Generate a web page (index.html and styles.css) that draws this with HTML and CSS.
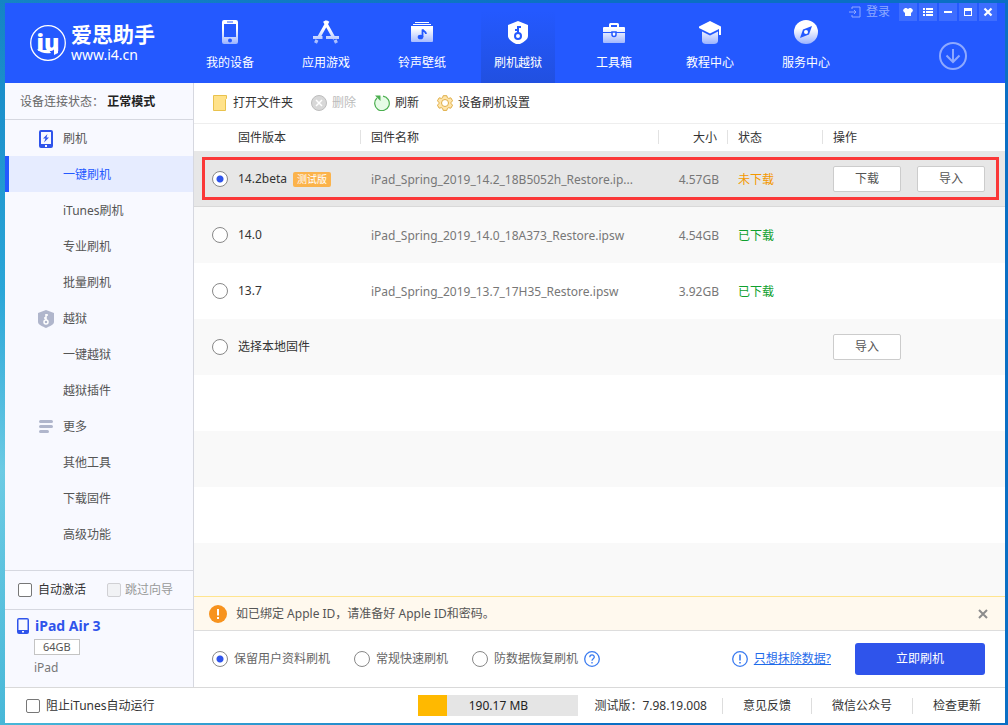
FILE: index.html
```html
<!DOCTYPE html>
<html lang="zh-CN">
<head>
<meta charset="utf-8">
<title>爱思助手</title>
<link rel="stylesheet" href="styles.css">
</head>
<body>
<svg class="defs" width="0" height="0" aria-hidden="true">
  <defs>
    <linearGradient id="fade" x1="0" y1="0" x2="0" y2="24" gradientUnits="userSpaceOnUse">
      <stop offset="0.35" stop-color="#fff"/><stop offset="1" stop-color="#9cb3ff"/>
    </linearGradient>
  </defs>
</svg>
<div class="window">
  <header class="topbar">
    <div class="brand">
      <svg class="brand-mark" viewBox="0 0 36 36" aria-hidden="true">
        <circle cx="18" cy="18" r="17.300" fill="none" stroke="#fff" stroke-width="1.300"/>
        <text x="18" y="26" text-anchor="middle" class="brand-letters">iu</text>
        <path fill="#fff" d="M7 24c3 4 9 5 14 4l-2-3h-8zM24 22h4v6l-4 2z"/>
      </svg>
      <div class="brand-text">
        <span class="brand-name">爱思助手</span>
        <span class="brand-url">www.i4.cn</span>
      </div>
    </div>
    <nav class="nav">
      <a class="nav-item" href="#">
        <svg viewBox="0 0 24 24"><path fill="url(#fade)" fill-rule="evenodd" d="M6 0h12a2 2 0 0 1 2 2v20a2 2 0 0 1-2 2H6a2 2 0 0 1-2-2V2a2 2 0 0 1 2-2zm0 4v13h12V4zM9 1.500v1h6v-1zM12 18.500a2 2 0 1 0 0 4a2 2 0 0 0 0-4z"/></svg>
        <span>我的设备</span></a>
      <a class="nav-item" href="#">
        <svg class="wide" viewBox="-1 0 26 24"><g stroke="url(#fade)" stroke-width="3.200" fill="none"><path d="M10.500 1l10 18M14 1L5 17M-1 17.500h9.500M12 17.500h13M3 20l-1.500 3M21 20l1.500 3"/></g></svg>
        <span>应用游戏</span></a>
      <a class="nav-item" href="#">
        <svg viewBox="0 0 24 24"><path fill="#fff" d="M5 2h14v1H5zM3 4h18v1H3z"/><path fill="url(#fade)" d="M1 6h22v15a1 1 0 0 1-1 1H2a1 1 0 0 1-1-1z"/><ellipse cx="10.500" cy="17" rx="2.800" ry="2.300" fill="#2459ff"/><path d="M12.500 17V9.500c1 2 3.500 2 3.500 4.500" fill="none" stroke="#2459ff" stroke-width="1.800"/></svg>
        <span>铃声壁纸</span></a>
      <a class="nav-item active" href="#">
        <svg viewBox="0 0 24 24"><path fill="#fff" d="M12 1l10 4v11c0 4-6 7-10 9C8 23 2 20 2 16V5z"/><circle cx="12" cy="16" r="3" fill="none" stroke="#2459ff" stroke-width="2"/><path d="M12 14V6M12 7h3M12 10h-3" fill="none" stroke="#2459ff" stroke-width="2"/></svg>
        <span>刷机越狱</span></a>
      <a class="nav-item" href="#">
        <svg viewBox="0 0 24 24"><path fill="none" stroke="#fff" stroke-width="2" d="M8 7V4.500a.5.5 0 0 1 .5-.5h7a.5.5 0 0 1 .5.5V7"/><path fill="url(#fade)" d="M2 7h20a1 1 0 0 1 1 1v4H1V8a1 1 0 0 1 1-1zM1 13h22v9a1 1 0 0 1-1 1H2a1 1 0 0 1-1-1z"/><path fill="#fff" stroke="#2459ff" stroke-width="1.500" d="M10 12h4v2.500a2 2 0 0 1-4 0z"/></svg>
        <span>工具箱</span></a>
      <a class="nav-item" href="#">
        <svg viewBox="0 0 24 24"><path fill="#fff" d="M12 1l11 5.500v8.500h-2V9l-9 4.500L1 8V6.500z"/><path fill="url(#fade)" d="M4 11.500l8 4 8-4V21c0 2-2 3-4 3H8c-2 0-4-1-4-3z"/></svg>
        <span>教程中心</span></a>
      <a class="nav-item" href="#">
        <svg viewBox="0 0 24 24"><circle cx="12" cy="12" r="12" fill="url(#fade)"/><path fill="#2459ff" d="M18 6l-3 8.500L6 18l3-8.500z"/><circle cx="12" cy="12" r="2" fill="#fff"/></svg>
        <span>服务中心</span></a>
    </nav>
    <div class="top-tools">
      <div class="window-controls">
        <button class="login" type="button">
          <svg viewBox="0 0 12 12"><path d="M3 3V1h8v10H3V9M0 6h7M5 4l2 2-2 2" fill="none" stroke="currentColor"/></svg>登录</button>
        <button class="ctl" type="button" aria-label="换肤"><svg viewBox="0 0 18 18"><path fill="#fff" d="M6 5h1.500l1.500 1 1.500-1H12l2 2-1 2.500h-1V13H6V9.500H5L4 7z"/></svg></button>
        <button class="ctl" type="button" aria-label="菜单"><svg viewBox="0 0 18 18"><path fill="#fff" d="M4 5h2v2H4zM7 5h7v2H7zM4 8h2v2H4zM7 8h7v2H7zM4 11h2v2H4zM7 11h7v2H7z"/></svg></button>
        <button class="ctl" type="button" aria-label="最小化"><svg viewBox="0 0 18 18"><path fill="#fff" d="M5 8h8v2H5z"/></svg></button>
        <button class="ctl" type="button" aria-label="最大化"><svg viewBox="0 0 18 18"><path fill="#fff" fill-rule="evenodd" d="M5 5h8v8H5zM6 8v4h6V8z"/></svg></button>
        <button class="ctl" type="button" aria-label="关闭"><svg viewBox="0 0 18 18"><path stroke="#fff" stroke-width="2.200" d="M5.500 5.500l7 7M12.500 5.500l-7 7"/></svg></button>
      </div>
      <button class="downloads" type="button" aria-label="下载管理"><svg viewBox="0 0 28 28"><g fill="none" stroke="#8ea9ff" stroke-width="2"><circle cx="14" cy="14" r="13"/><path d="M14 7v12M7.500 13.500L14 20l6.500-6.500"/></g></svg></button>
    </div>
  </header>

  <div class="body">
    <aside class="sidebar">
      <p class="status">设备连接状态： <strong>正常模式</strong></p>
      <nav class="menu">
        <a class="menu-item" href="#"><svg viewBox="0 0 16 18"><path fill="#2f54eb" fill-rule="evenodd" d="M3 0h10a2 2 0 0 1 2 2v14a2 2 0 0 1-2 2H3a2 2 0 0 1-2-2V2a2 2 0 0 1 2-2zM3 2v12h10V2zM7 15v2h2v-2z"/><path fill="#2f54eb" d="M9.500 4L5 8.500h2.500L6 12.500 11 7.500H8.500z"/></svg>刷机</a>
        <a class="menu-item active" href="#">一键刷机</a>
        <a class="menu-item" href="#">iTunes刷机</a>
        <a class="menu-item" href="#">专业刷机</a>
        <a class="menu-item" href="#">批量刷机</a>
        <a class="menu-item" href="#"><svg viewBox="0 0 16 18"><path fill="#b0b6cc" d="M8 0l8 3v9c0 3-5 4.500-8 6-3-1.500-8-3-8-6V3z"/><circle cx="8" cy="12" r="2" fill="none" stroke="#fff" stroke-width="1.500"/><path d="M8 10V4M8 5h2M8 8H6" fill="none" stroke="#fff" stroke-width="1.500"/></svg>越狱</a>
        <a class="menu-item" href="#">一键越狱</a>
        <a class="menu-item" href="#">越狱插件</a>
        <a class="menu-item" href="#"><svg viewBox="0 0 16 18"><path stroke="#b0b6cc" stroke-width="3" stroke-linecap="round" d="M2.500 3.500h11M2.500 8.500h11M2.500 13.500h7"/></svg>更多</a>
        <a class="menu-item" href="#">其他工具</a>
        <a class="menu-item" href="#">下载固件</a>
        <a class="menu-item" href="#">高级功能</a>
      </nav>
      <div class="options">
        <label class="check"><input type="checkbox">自动激活</label>
        <label class="check disabled"><input type="checkbox" disabled>跳过向导</label>
      </div>
      <div class="device">
        <h2 class="device-name"><svg viewBox="0 0 12 16"><path fill="#2f54eb" fill-rule="evenodd" d="M2 0h8a2 2 0 0 1 2 2v12a2 2 0 0 1-2 2H2a2 2 0 0 1-2-2V2a2 2 0 0 1 2-2zM1.500 1.500V12h9V1.500zM5 13v1.500h2V13z"/></svg>iPad Air 3</h2>
        <span class="capacity">64GB</span>
        <span class="device-type">iPad</span>
      </div>
    </aside>

    <main class="main">
      <div class="toolbar">
        <button type="button" class="tool"><svg viewBox="0 0 16 16"><path fill="#ffe28a" stroke="#e9c24d" d="M1.500.5h13v3l-1 1v11h-12z"/></svg>打开文件夹</button>
        <button type="button" class="tool" disabled><svg viewBox="0 0 16 16"><circle cx="8" cy="8" r="7.500" fill="#d8d8d8" stroke="#bdbdbd"/><path stroke="#fff" stroke-width="1.500" d="M5 5l6 6M11 5l-6 6"/></svg>删除</button>
        <button type="button" class="tool"><svg viewBox="0 0 16 16"><circle cx="8" cy="8.500" r="7" fill="#e6fbe6"/><path fill="none" stroke="#4caf50" stroke-width="1.200" d="M9 1.100A7.300 7.300 0 1 1 3 3"/><path fill="#4caf50" d="M1 .5h5.500V6z"/></svg>刷新</button>
        <button type="button" class="tool"><svg viewBox="0 0 16 16"><path fill="#ffe5ab" stroke="#dfad45" stroke-linejoin="round" d="M6.200.7h3.600l.6 2 1.300.7 2.100-.6 1.800 3-1.500 1.500v1.400l1.500 1.500-1.800 3-2.100-.5-1.300.7-.6 2H6.200l-.6-2-1.300-.7-2.100.5-1.800-3 1.500-1.500V7.300L.4 5.800l1.800-3 2.100.6 1.300-.7z"/><circle cx="8" cy="8" r="3.500" fill="#fff" stroke="#dfad45"/></svg>设备刷机设置</button>
      </div>

      <div class="list">
        <table class="firmware">
          <colgroup><col class="c-ver"><col class="c-name"><col class="c-size"><col class="c-state"><col></colgroup>
          <thead>
            <tr><th class="ver">固件版本</th><th class="name">固件名称</th><th class="size">大小</th><th class="state">状态</th><th class="ops">操作</th></tr>
          </thead>
          <tbody>
            <tr class="selected">
              <td><label class="radio"><input type="radio" name="fw" checked>14.2beta<span class="badge">测试版</span></label></td>
              <td class="name">iPad_Spring_2019_14.2_18B5052h_Restore.ip...</td>
              <td class="size">4.57GB</td>
              <td class="state pending">未下载</td>
              <td class="ops"><div class="buttons"><button type="button" class="btn">下载</button><button type="button" class="btn">导入</button></div></td>
            </tr>
            <tr>
              <td><label class="radio"><input type="radio" name="fw">14.0</label></td>
              <td class="name">iPad_Spring_2019_14.0_18A373_Restore.ipsw</td>
              <td class="size">4.54GB</td>
              <td class="state done">已下载</td><td></td>
            </tr>
            <tr>
              <td><label class="radio"><input type="radio" name="fw">13.7</label></td>
              <td class="name">iPad_Spring_2019_13.7_17H35_Restore.ipsw</td>
              <td class="size">3.92GB</td>
              <td class="state done">已下载</td><td></td>
            </tr>
            <tr>
              <td><label class="radio"><input type="radio" name="fw">选择本地固件</label></td>
              <td></td><td></td><td></td>
              <td class="ops"><div class="buttons"><button type="button" class="btn">导入</button></div></td>
            </tr>
          </tbody>
        </table>
      </div>

      <div class="notice">
        <svg viewBox="0 0 18 18"><circle cx="9" cy="9" r="9" fill="#f7931e"/><path fill="#fff" d="M8 4h2v6.500H8zM8 12h2v2H8z"/></svg>
        <span>如已绑定 Apple ID，请准备好 Apple ID和密码。</span>
        <button type="button" class="close" aria-label="关闭提示"><svg viewBox="0 0 10 10"><path stroke="#8c8c8c" stroke-width="2" d="M1 1l8 8M9 1L1 9"/></svg></button>
      </div>

      <div class="actions">
        <label class="mode"><input type="radio" name="mode" checked>保留用户资料刷机</label>
        <label class="mode"><input type="radio" name="mode">常规快速刷机</label>
        <label class="mode"><input type="radio" name="mode">防数据恢复刷机<svg viewBox="0 0 16 16"><circle cx="8" cy="8" r="7.300" fill="none" stroke="#3a7bf0" stroke-width="1.300"/><path d="M5.800 6.300C5.800 3 10.300 3.200 10.300 6 10.300 7.700 8 7.700 8 9.800M8 11v1.500" fill="none" stroke="#3a7bf0" stroke-width="1.300"/></svg></label>
        <a class="erase" href="#"><svg viewBox="0 0 16 16"><circle cx="8" cy="8" r="7.300" fill="none" stroke="#3a7bf0" stroke-width="1.300"/><path fill="#3a7bf0" d="M7.200 3.500h1.600v6H7.200zM7.200 11h1.600v1.600H7.200z"/></svg><span>只想抹除数据?</span></a>
        <button type="button" class="primary">立即刷机</button>
      </div>
    </main>
  </div>

  <footer class="footer">
    <label class="check"><input type="checkbox">阻止iTunes自动运行</label>
    <div class="progress" role="progressbar" aria-valuenow="18" aria-valuemin="0" aria-valuemax="100" aria-label="下载进度"><div class="progress-fill" style="width:18%"></div><span>190.17 MB</span></div>
    <span class="version">测试版：7.98.19.008</span>
    <a class="foot-link" href="#">意见反馈</a>
    <a class="foot-link" href="#">微信公众号</a>
    <a class="foot-link" href="#">检查更新</a>
  </footer>
</div>
</body>
</html>
```
FILE: styles.css
```css
* { box-sizing: border-box; }

body {
  margin: 0;
  min-height: 100vh;
  display: flex;
  padding: 3px 3px 2px 5px;
  background: linear-gradient(to right, transparent, #0a6fc4 60%), linear-gradient(#1484c4, #2aa6d8 40%, #6ccbe4 65%, #48b8d8);
  color: #333;
  font: 12px/18px "Noto Sans", "Noto Sans CJK SC", sans-serif;
}

button, input { font: inherit; margin: 0; }
button { border: 0; padding: 0; background: none; color: inherit; }
a { color: inherit; text-decoration: none; }
svg { display: block; flex: none; }
.defs { position: absolute; }

.window { flex: 1; display: flex; flex-direction: column; min-width: 0; background: #fff; }

/* Top bar */
.topbar { display: flex; height: 80px; background: #2459ff; color: #fff; }
.brand { display: flex; align-items: center; gap: 5px; width: 188px; padding-left: 25px; }
.brand-mark { width: 36px; height: 36px; }
.brand-letters { font: 900 23px "Noto Sans", sans-serif; fill: #fff; }
.brand-text { display: flex; flex-direction: column; }
.brand-name { font-size: 21px; line-height: 24px; font-weight: 700; }
.brand-url { font-size: 14px; line-height: 18px; }
.nav { display: flex; gap: 22px; padding-top: 7px; }
.nav-item { width: 74px; display: flex; flex-direction: column; align-items: center; gap: 10px; padding-top: 10px; }
.nav-item svg { width: 24px; height: 24px; }
.nav-item .wide { width: 26px; }
.nav-item.active { background: linear-gradient(#2459ff, #2150e0); }
.top-tools { margin-left: auto; padding-right: 8px; display: flex; flex-direction: column; align-items: flex-end; gap: 21px; }
.window-controls { display: flex; gap: 2px; }
.login { display: flex; align-items: center; gap: 5px; margin-right: 7px; color: #8ea9ff; }
.login svg { width: 12px; height: 12px; }
.ctl { width: 18px; height: 18px; background: #3e6dff; }
.downloads { width: 28px; height: 28px; margin-right: 30px; }

/* Sidebar */
.body { flex: 1; display: flex; min-height: 0; }
.sidebar { width: 189px; flex: none; display: flex; flex-direction: column; background: #f8f9ff; border-right: 1px solid #d6d8e0; }
.status { margin: 0; padding: 10px 15px 8px; border-bottom: 1px solid #d6d8e0; color: #666; }
.status strong { color: #222; }
.menu { flex: 1; }
.menu-item { display: flex; align-items: center; height: 36px; padding-top: 2px; padding-left: 58px; color: #555; }
.menu-item svg { width: 16px; height: 18px; margin: 0 9px 0 -25px; }
.menu-item.active { border-left: 4px solid #2459ff; padding-left: 54px; background: #e6ecff; color: #2459ff; }
.options { display: flex; gap: 21px; padding: 10px 13px; border-top: 1px solid #d6d8e0; }
.check { display: flex; align-items: center; gap: 6px; }
.check input { appearance: none; width: 14px; height: 14px; border: 1px solid #777; border-radius: 2px; background: #fff; }
.check.disabled { color: #999; gap: 4px; }
.check.disabled input { border-color: #d0d0d4; background: #f1f2f5; }
.device { display: flex; flex-direction: column; align-items: flex-start; padding: 6px 12px 10px; border-top: 1px solid #d6d8e0; }
.device-name { display: flex; align-items: center; gap: 6px; margin: 0; font-size: 14px; line-height: 20px; color: #2f54eb; }
.device-name svg { width: 12px; height: 16px; }
.capacity { margin: 3px 0 4px 17px; padding: 0 8px; border: 1px solid #c4c4c4; font-size: 11px; line-height: 14px; color: #555; background: #fff; }
.device-type { margin-left: 17px; color: #777; }

/* Main */
.main { flex: 1; min-width: 0; display: flex; flex-direction: column; }
.toolbar { display: flex; align-items: center; gap: 18px; height: 41px; padding-left: 18px; border-bottom: 1px solid #eee; }
.tool { display: flex; align-items: center; gap: 5px; }
.tool svg { width: 16px; height: 16px; }
.tool:disabled { color: #bbb; }

.list { flex: 1; background: repeating-linear-gradient(#fff 0 56px, #f9f9f9 56px 112px) 0 27px; overflow: hidden; }
.firmware { width: 100%; border-collapse: collapse; table-layout: fixed; }
.c-ver { width: 167px; }
.c-name { width: 298px; }
.c-size { width: 69px; }
.c-state { width: 95px; }
.firmware th { height: 27px; padding: 0; font-weight: 400; text-align: left; background: linear-gradient(#e2e2e2, #e2e2e2) right 6px / 1px 14px no-repeat #fff; }
.firmware th:last-child { background: #fff; }
.firmware td { height: 56px; padding: 0; }
.firmware .ver { padding-left: 44px; }
.firmware .name { padding-left: 10px; white-space: nowrap; }
.firmware .state, .firmware .ops { padding-left: 10px; }
.firmware th.size { padding-right: 11px; text-align: right; }
.firmware td.size { padding-right: 9px; text-align: right; }
.firmware td.name, .firmware td.size, .firmware td.state { padding-top: 2px; }
.firmware td.name, .firmware td.size { color: #777; }
.firmware .pending { color: #f39800; }
.firmware .done { color: #0fa02e; }
.selected { position: relative; background: #e7e7e7; box-shadow: inset 0 -1px #d9d9d9; }
.selected td:first-child::after { content: ""; position: absolute; inset: 6px 6px 7px 8px; border: 3px solid #fb3838; pointer-events: none; }

input[type="radio"] { appearance: none; width: 16px; height: 16px; border: 1px solid #888; border-radius: 50%; background: #fff; }
input[type="radio"]:checked { background: radial-gradient(circle, #2f54eb 3px, #fff 4px); }
.radio { display: flex; align-items: center; padding-left: 18px; }
.radio input { margin-right: 10px; }
.badge { margin-left: 6px; padding: 0 4px; border-radius: 2px; background: #fbb34c; color: #fff; font-size: 10px; line-height: 15px; }
.buttons { display: flex; gap: 16px; }
.btn { flex: none; width: 68px; height: 26px; border: 1px solid #ccc; border-radius: 2px; background: #fff; color: #555; }

.notice { display: flex; align-items: center; gap: 9px; height: 35px; padding: 0 17px 0 15px; border-top: 1px solid #ffe58f; border-bottom: 1px solid #ddd; background: #fff9ee; color: #555; }
.notice svg { width: 18px; height: 18px; }
.notice .close { margin-left: auto; }
.notice .close svg { width: 10px; height: 10px; }

.actions { display: flex; align-items: center; gap: 24px; height: 56px; padding: 0 20px 0 18px; color: #666; }
.mode, .erase { display: flex; align-items: center; gap: 6px; white-space: nowrap; }
.mode svg, .erase svg { width: 16px; height: 16px; }
.erase { margin-left: auto; color: #1f6bea; }
.erase span { text-decoration: underline; }
.primary { width: 130px; height: 32px; border-radius: 3px; background: #2f54eb; color: #fff; }

/* Footer */
.footer { display: flex; align-items: center; height: 36px; padding: 0 4px 0 21px; border-top: 1px solid #d9d9d9; white-space: nowrap; }
.progress { position: relative; width: 160px; height: 21px; margin: 0 16px 0 auto; background: #e5e5e5; text-align: center; line-height: 21px; color: #222; }
.progress-fill { position: absolute; inset: 0 auto 0 0; background: #ffb900; }
.progress span { position: relative; }
.version { padding-right: 15px; }
.foot-link { padding: 0 20px; border-left: 1px solid #ddd; line-height: 16px; }
```
